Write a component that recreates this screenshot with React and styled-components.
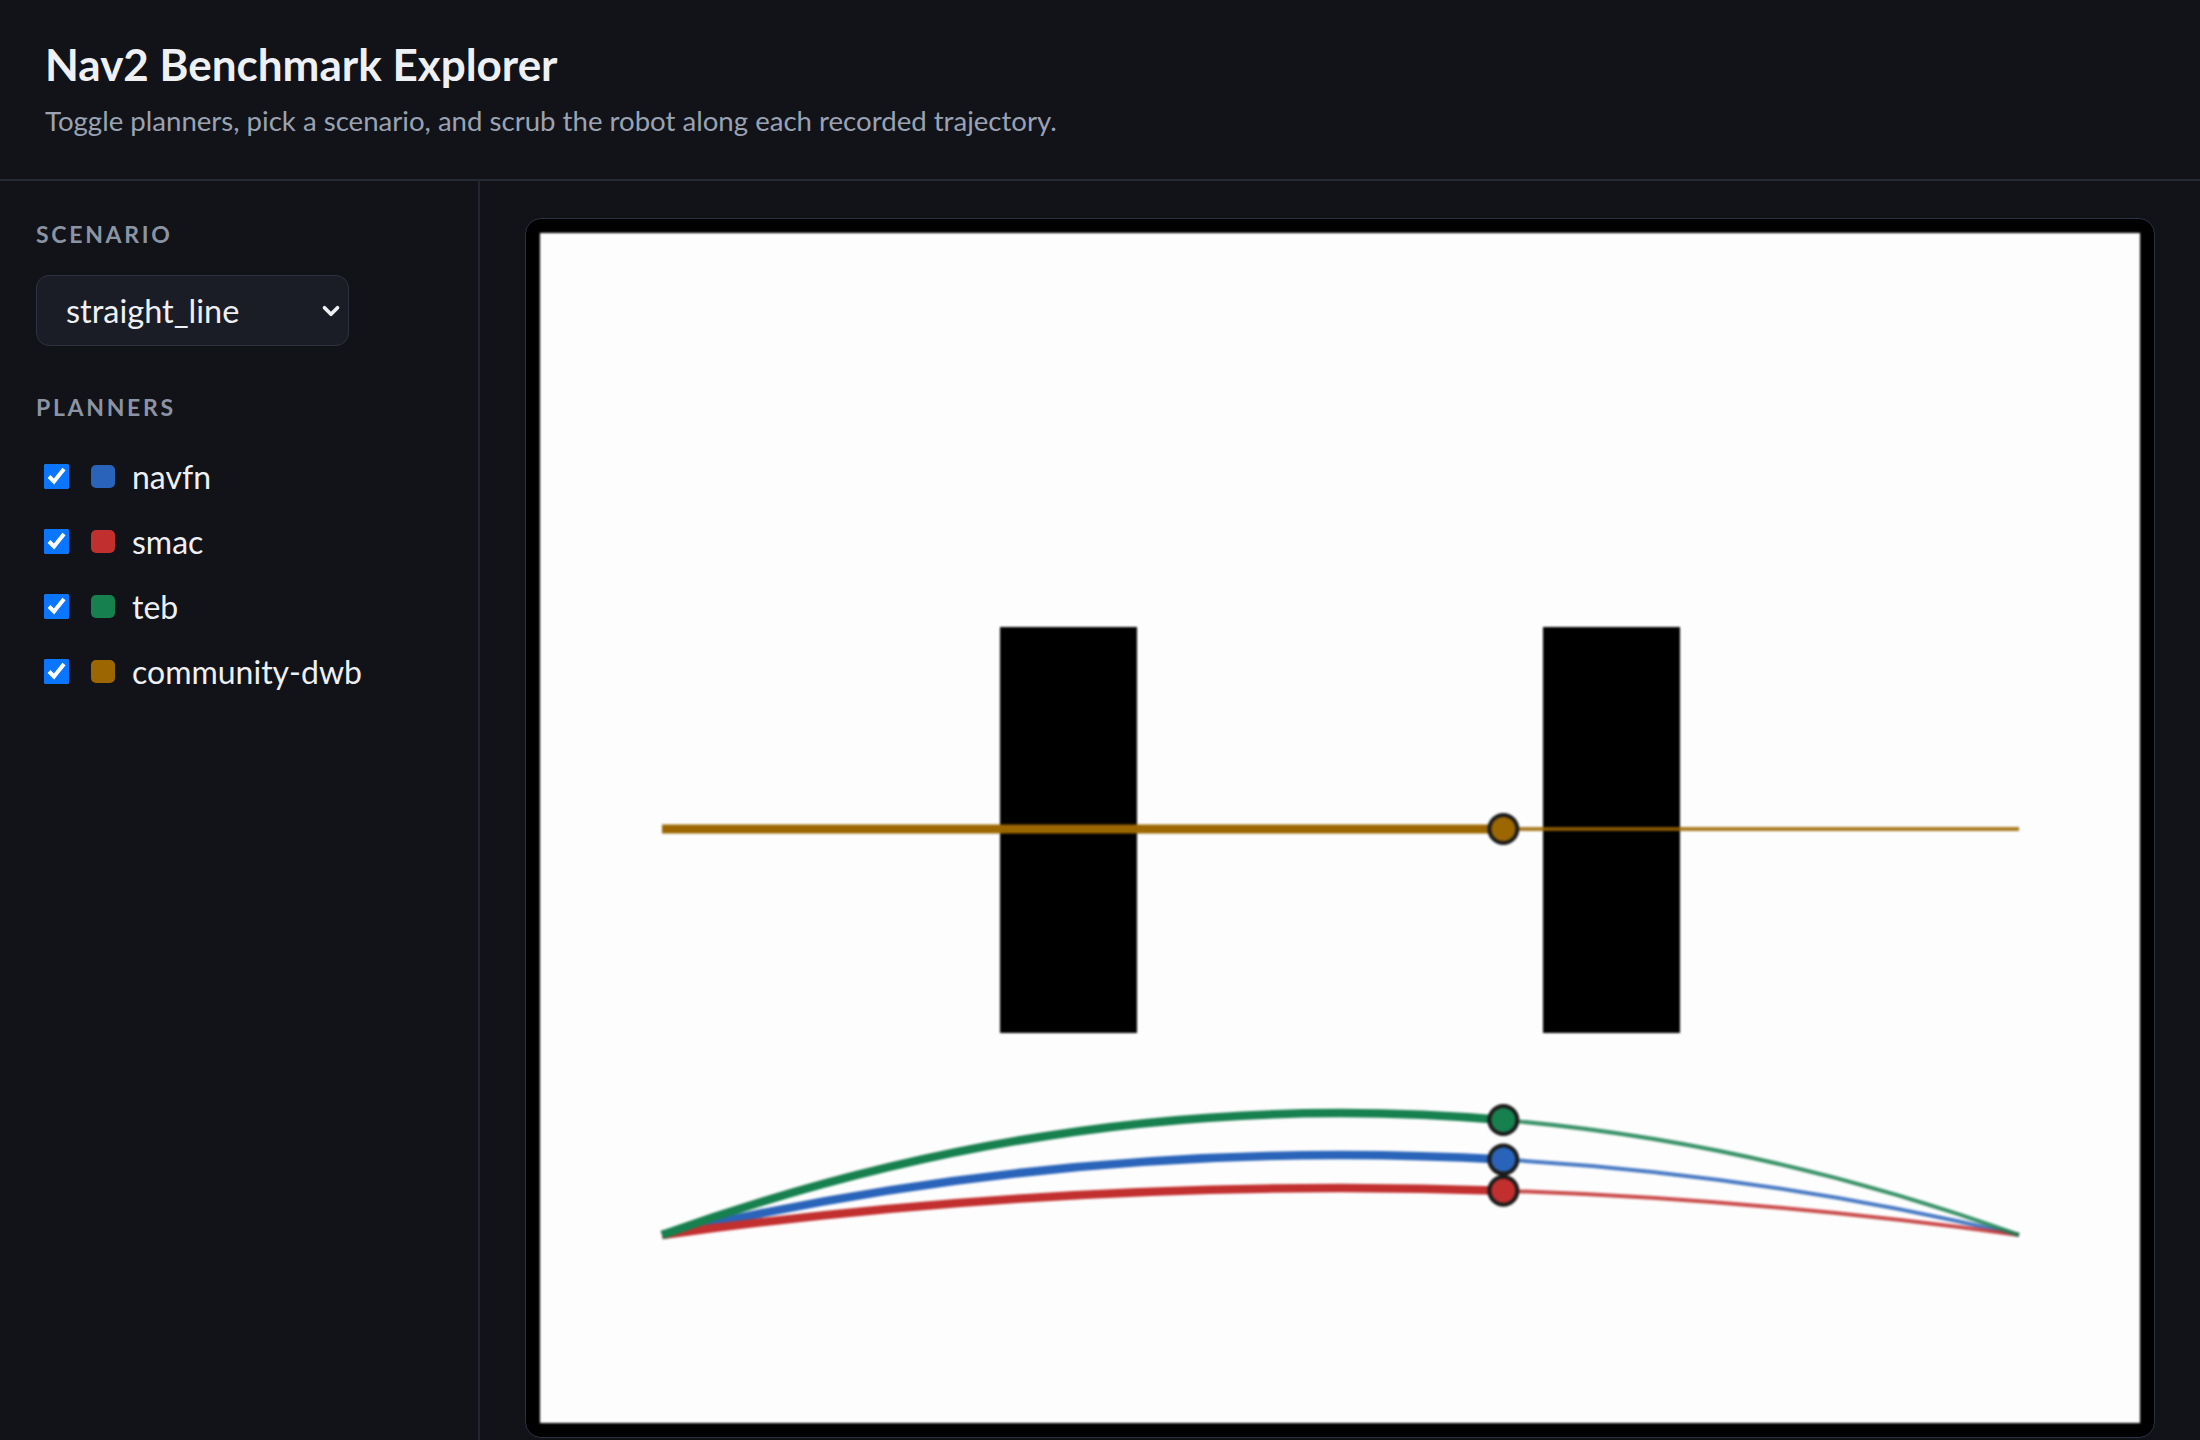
import React, { useState } from "react";
import styled, { createGlobalStyle } from "styled-components";
import { ChevronDown } from "lucide-react";

const GlobalStyle = createGlobalStyle`
  html, body {
    margin: 0;
    padding: 0;
    background: #111318;
    color: #eef0f4;
    font-family: Lato, "Noto Sans", sans-serif;
  }
  * {
    box-sizing: border-box;
  }
`;

const PLANNERS = [
  { name: "navfn", color: "#2a64ba", ctrl: 842 },
  { name: "smac", color: "#c22f2f", ctrl: 908 },
  { name: "teb", color: "#17804f", ctrl: 758 },
  { name: "community-dwb", color: "#9c6700", ctrl: null },
];

const START = { x: 122, y: 1002 };
const END = { x: 1479, y: 1002 };
const LINE_Y = 596;
const PROGRESS = 0.62;

const StyledPage = styled.div`
  display: flex;
  flex-direction: column;
  min-height: 100vh;
`;
const StyledHeader = styled.header`
  height: 181px;
  padding: 36px 45px 0;
  border-bottom: 2px solid #262a34;
`;
const StyledTitle = styled.h1`
  margin: 0;
  font-size: 44px;
  line-height: 56px;
  font-weight: 700;
  color: #eef0f4;
`;
const StyledSubtitle = styled.p`
  margin: 12px 0 0;
  font-size: 27.6px;
  line-height: 34px;
  color: #9aa2b3;
`;
const StyledBody = styled.div`
  display: flex;
  flex: 1;
`;
const StyledSidebar = styled.aside`
  width: 480px;
  flex-shrink: 0;
  padding: 40px 36px;
  border-right: 2px solid #22252e;
`;
const StyledSectionLabel = styled.div`
  font-size: 23px;
  line-height: 26px;
  font-weight: 700;
  letter-spacing: 2.7px;
  color: #8c94a4;
  margin-top: ${(p) => p.$top || 0}px;
`;
const StyledSelectWrap = styled.div`
  position: relative;
  width: 313px;
  margin-top: 28px;
`;
const StyledSelect = styled.select`
  appearance: none;
  width: 100%;
  height: 71px;
  padding: 0 50px 0 29px;
  border: 1.5px solid #2e3240;
  border-radius: 13px;
  background: #1b1d26;
  color: #eef0f4;
  font-family: Lato, "Noto Sans", sans-serif;
  font-size: 32.5px;
  outline: none;
`;
const StyledChevron = styled(ChevronDown)`
  position: absolute;
  right: 5px;
  top: 23px;
  pointer-events: none;
  color: #eef0f4;
`;
const StyledPlannerList = styled.div`
  display: flex;
  flex-direction: column;
  gap: 40px;
  margin-top: 44px;
  padding-left: 8px;
`;
const StyledPlannerRow = styled.label`
  display: flex;
  align-items: center;
  height: 25px;
  cursor: pointer;
`;
const StyledCheckbox = styled.input`
  width: 25px;
  height: 25px;
  margin: 0 22px 0 0;
  accent-color: #0a75ff;
`;
const StyledSwatch = styled.span`
  width: 24px;
  height: 23px;
  border-radius: 5px;
  background: ${(p) => p.$color};
  margin-right: 17px;
`;
const StyledPlannerName = styled.span`
  font-size: 32px;
  line-height: 1;
  color: #eef0f4;
`;
const StyledMain = styled.main`
  flex: 1;
  padding: 37px 45px;
`;
const StyledCanvasFrame = styled.div`
  background: #000;
  border: 1px solid #2c3042;
  border-radius: 16px;
  padding: 14px;
`;
const StyledMap = styled.svg`
  display: block;
  width: 100%;
  height: auto;
  filter: blur(0.8px);
`;

// split the quadratic curve at t: the travelled part and the part still ahead
const splitQuad = (ctrlY, t) => {
  const c = { x: (START.x + END.x) / 2, y: ctrlY };
  const a = { x: START.x + (c.x - START.x) * t, y: START.y + (c.y - START.y) * t };
  const b = { x: c.x + (END.x - c.x) * t, y: c.y + (END.y - c.y) * t };
  const p = { x: a.x + (b.x - a.x) * t, y: a.y + (b.y - a.y) * t };
  return {
    done: `M${START.x} ${START.y} Q${a.x} ${a.y} ${p.x} ${p.y}`,
    rest: `M${p.x} ${p.y} Q${b.x} ${b.y} ${END.x} ${END.y}`,
    point: p,
  };
};

const Trajectory = ({ planner }) => {
  if (planner.ctrl === null) {
    const x = START.x + (END.x - START.x) * PROGRESS;
    return (
      <g>
        <path d={`M${START.x} ${LINE_Y} L${x} ${LINE_Y}`} stroke={planner.color} strokeWidth="9" />
        <path d={`M${x} ${LINE_Y} L${END.x} ${LINE_Y}`} stroke={planner.color} strokeWidth="4" opacity="0.85" />
      </g>
    );
  }
  const seg = splitQuad(planner.ctrl, PROGRESS);
  return (
    <g fill="none">
      <path d={seg.done} stroke={planner.color} strokeWidth="8.5" />
      <path d={seg.rest} stroke={planner.color} strokeWidth="4" opacity="0.85" />
    </g>
  );
};

const Robot = ({ planner }) => {
  const x = START.x + (END.x - START.x) * PROGRESS;
  const y = planner.ctrl === null ? LINE_Y : splitQuad(planner.ctrl, PROGRESS).point.y;
  return <circle cx={x} cy={y} r="14" fill={planner.color} stroke="#1b1b1b" strokeWidth="4" />;
};

export default function App() {
  const [enabled, setEnabled] = useState(PLANNERS.map(() => true));
  const [scenario, setScenario] = useState("straight_line");
  const visible = PLANNERS.filter((_, i) => enabled[i]);

  return (
    <>
      <GlobalStyle />
      <StyledPage>
        <StyledHeader>
          <StyledTitle>Nav2 Benchmark Explorer</StyledTitle>
          <StyledSubtitle>
            Toggle planners, pick a scenario, and scrub the robot along each recorded trajectory.
          </StyledSubtitle>
        </StyledHeader>
        <StyledBody>
          <StyledSidebar>
            <StyledSectionLabel>SCENARIO</StyledSectionLabel>
            <StyledSelectWrap>
              <StyledSelect value={scenario} onChange={(e) => setScenario(e.target.value)}>
                <option value="straight_line">straight_line</option>
                <option value="corridor">corridor</option>
                <option value="cluttered">cluttered</option>
              </StyledSelect>
              <StyledChevron size={26} strokeWidth={3.4} />
            </StyledSelectWrap>
            <StyledSectionLabel $top={48}>PLANNERS</StyledSectionLabel>
            <StyledPlannerList>
              {PLANNERS.map((p, i) => (
                <StyledPlannerRow key={p.name}>
                  <StyledCheckbox
                    type="checkbox"
                    checked={enabled[i]}
                    onChange={() => setEnabled(enabled.map((v, j) => (j === i ? !v : v)))}
                  />
                  <StyledSwatch $color={p.color} />
                  <StyledPlannerName>{p.name}</StyledPlannerName>
                </StyledPlannerRow>
              ))}
            </StyledPlannerList>
          </StyledSidebar>
          <StyledMain>
            <StyledCanvasFrame>
              <StyledMap viewBox="0 0 1600 1190">
                <rect x="0" y="0" width="1600" height="1190" fill="#fdfdfd" />
                <rect x="460" y="394" width="137" height="406" fill="#000" />
                <rect x="1003" y="394" width="137" height="406" fill="#000" />
                {visible.map((p) => (
                  <Trajectory key={p.name} planner={p} />
                ))}
                {visible.map((p) => (
                  <Robot key={p.name} planner={p} />
                ))}
              </StyledMap>
            </StyledCanvasFrame>
          </StyledMain>
        </StyledBody>
      </StyledPage>
    </>
  );
}
